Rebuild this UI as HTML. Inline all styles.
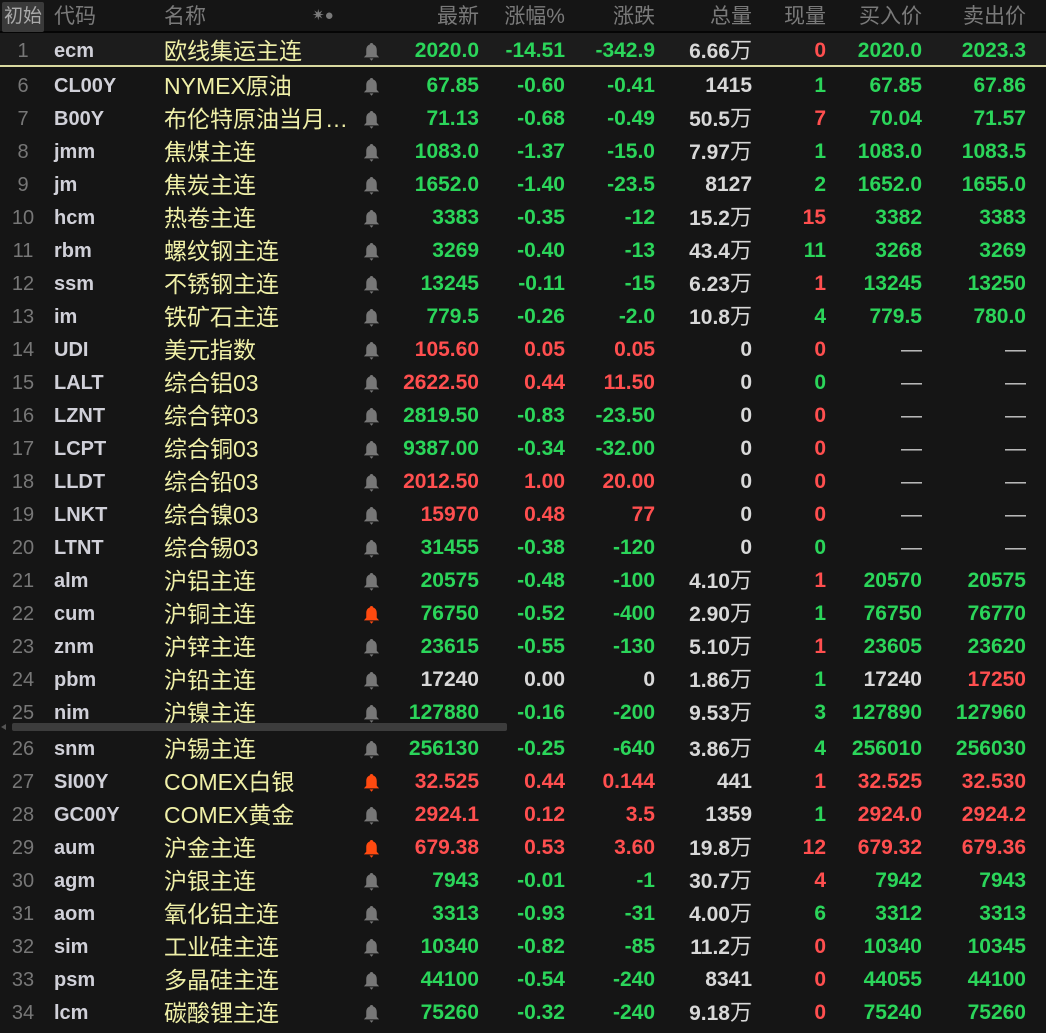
<!DOCTYPE html>
<html><head><meta charset="utf-8"><style>
body{margin:0;width:1046px;height:1033px;background:#151515;overflow:hidden;position:relative;font-family:"Liberation Sans","Noto Sans CJK SC",sans-serif}
.h{position:absolute;top:0;left:0;width:1046px;height:33px;color:#7a7a7a;font-size:21px;line-height:34px;border-bottom:2px solid #050505;box-sizing:border-box}
.h span{position:absolute}
.btn{position:absolute;left:2px;top:2px;width:42px;height:30px;background:#3a3a3a;color:#aaa;font-size:19px;line-height:30px;text-align:center;border-radius:2px}
.r{position:absolute;left:0;width:1046px;height:33px;line-height:36px;font-size:21px;font-weight:bold}
.r span{position:absolute;white-space:nowrap}
.a{left:0;width:46px;text-align:center;color:#777;font-weight:normal;font-size:20px}
.b{left:54px;color:#d0d0d8;font-size:20px}
.c{left:164px;color:#f0f0a8;font-weight:normal;font-size:23px}
.d{left:361px;top:8px;width:21px;height:21px}
.v1{right:567px}.v2{right:481px}.v3{right:391px}.v4{right:294px}.v5{right:220px}.v6{right:124px}.v7{right:20px}
.g{color:#2bd55a}.x{color:#ff4f4f}.w{color:#d8d8d8}.q{color:#ccc;font-weight:normal}
.wan{font-weight:normal;font-size:22px}
</style></head><body>
<svg width="0" height="0" style="position:absolute"><defs><symbol id="bl" viewBox="0 0 16 16"><path d="M8 1.5c.9 0 1.3.6 1.3 1.2C11.3 3.4 12 5 12 7v3.5l1.8 2H2.2L4 10.5V7c0-2 .7-3.6 2.7-4.3 0-.6.4-1.2 1.3-1.2zM6.5 13.2h3L8 15z"/></symbol></defs></svg>
<div class="h"><div class="btn">初始</div>
<span style="left:54px">代码</span><span style="left:164px">名称</span>
<span style="left:312px;font-size:15px;top:-1px">✷●</span>
<span style="right:567px">最新</span><span style="right:481px">涨幅%</span><span style="right:391px">涨跌</span><span style="right:294px">总量</span><span style="right:220px">现量</span><span style="right:124px">买入价</span><span style="right:20px">卖出价</span></div>
<div style="position:absolute;top:33px;left:0;width:1046px;height:33px;background:#1c1c1c"></div>
<div style="position:absolute;top:65px;left:0;width:1046px;height:2px;background:#d8d8a0"></div>

<div class="r" style="top:33px"><span class="a">1</span><span class="b">ecm</span><span class="c">欧线集运主连</span><svg class="d" style="fill:#777;position:absolute"><use href="#bl"/></svg><span class="v1 g">2020.0</span><span class="v2 g">-14.51</span><span class="v3 g">-342.9</span><span class="v4 w">6.66<span class="wan" style="position:static">万</span></span><span class="v5 x">0</span><span class="v6 g">2020.0</span><span class="v7 g">2023.3</span></div>
<div class="r" style="top:68px"><span class="a">6</span><span class="b">CL00Y</span><span class="c">NYMEX原油</span><svg class="d" style="fill:#777;position:absolute"><use href="#bl"/></svg><span class="v1 g">67.85</span><span class="v2 g">-0.60</span><span class="v3 g">-0.41</span><span class="v4 w">1415</span><span class="v5 g">1</span><span class="v6 g">67.85</span><span class="v7 g">67.86</span></div>
<div class="r" style="top:101px"><span class="a">7</span><span class="b">B00Y</span><span class="c">布伦特原油当月…</span><svg class="d" style="fill:#777;position:absolute"><use href="#bl"/></svg><span class="v1 g">71.13</span><span class="v2 g">-0.68</span><span class="v3 g">-0.49</span><span class="v4 w">50.5<span class="wan" style="position:static">万</span></span><span class="v5 x">7</span><span class="v6 g">70.04</span><span class="v7 g">71.57</span></div>
<div class="r" style="top:134px"><span class="a">8</span><span class="b">jmm</span><span class="c">焦煤主连</span><svg class="d" style="fill:#777;position:absolute"><use href="#bl"/></svg><span class="v1 g">1083.0</span><span class="v2 g">-1.37</span><span class="v3 g">-15.0</span><span class="v4 w">7.97<span class="wan" style="position:static">万</span></span><span class="v5 g">1</span><span class="v6 g">1083.0</span><span class="v7 g">1083.5</span></div>
<div class="r" style="top:167px"><span class="a">9</span><span class="b">jm</span><span class="c">焦炭主连</span><svg class="d" style="fill:#777;position:absolute"><use href="#bl"/></svg><span class="v1 g">1652.0</span><span class="v2 g">-1.40</span><span class="v3 g">-23.5</span><span class="v4 w">8127</span><span class="v5 g">2</span><span class="v6 g">1652.0</span><span class="v7 g">1655.0</span></div>
<div class="r" style="top:200px"><span class="a">10</span><span class="b">hcm</span><span class="c">热卷主连</span><svg class="d" style="fill:#777;position:absolute"><use href="#bl"/></svg><span class="v1 g">3383</span><span class="v2 g">-0.35</span><span class="v3 g">-12</span><span class="v4 w">15.2<span class="wan" style="position:static">万</span></span><span class="v5 x">15</span><span class="v6 g">3382</span><span class="v7 g">3383</span></div>
<div class="r" style="top:233px"><span class="a">11</span><span class="b">rbm</span><span class="c">螺纹钢主连</span><svg class="d" style="fill:#777;position:absolute"><use href="#bl"/></svg><span class="v1 g">3269</span><span class="v2 g">-0.40</span><span class="v3 g">-13</span><span class="v4 w">43.4<span class="wan" style="position:static">万</span></span><span class="v5 g">11</span><span class="v6 g">3268</span><span class="v7 g">3269</span></div>
<div class="r" style="top:266px"><span class="a">12</span><span class="b">ssm</span><span class="c">不锈钢主连</span><svg class="d" style="fill:#777;position:absolute"><use href="#bl"/></svg><span class="v1 g">13245</span><span class="v2 g">-0.11</span><span class="v3 g">-15</span><span class="v4 w">6.23<span class="wan" style="position:static">万</span></span><span class="v5 x">1</span><span class="v6 g">13245</span><span class="v7 g">13250</span></div>
<div class="r" style="top:299px"><span class="a">13</span><span class="b">im</span><span class="c">铁矿石主连</span><svg class="d" style="fill:#777;position:absolute"><use href="#bl"/></svg><span class="v1 g">779.5</span><span class="v2 g">-0.26</span><span class="v3 g">-2.0</span><span class="v4 w">10.8<span class="wan" style="position:static">万</span></span><span class="v5 g">4</span><span class="v6 g">779.5</span><span class="v7 g">780.0</span></div>
<div class="r" style="top:332px"><span class="a">14</span><span class="b">UDI</span><span class="c">美元指数</span><svg class="d" style="fill:#777;position:absolute"><use href="#bl"/></svg><span class="v1 x">105.60</span><span class="v2 x">0.05</span><span class="v3 x">0.05</span><span class="v4 w">0</span><span class="v5 x">0</span><span class="v6 q">—</span><span class="v7 q">—</span></div>
<div class="r" style="top:365px"><span class="a">15</span><span class="b">LALT</span><span class="c">综合铝03</span><svg class="d" style="fill:#777;position:absolute"><use href="#bl"/></svg><span class="v1 x">2622.50</span><span class="v2 x">0.44</span><span class="v3 x">11.50</span><span class="v4 w">0</span><span class="v5 g">0</span><span class="v6 q">—</span><span class="v7 q">—</span></div>
<div class="r" style="top:398px"><span class="a">16</span><span class="b">LZNT</span><span class="c">综合锌03</span><svg class="d" style="fill:#777;position:absolute"><use href="#bl"/></svg><span class="v1 g">2819.50</span><span class="v2 g">-0.83</span><span class="v3 g">-23.50</span><span class="v4 w">0</span><span class="v5 x">0</span><span class="v6 q">—</span><span class="v7 q">—</span></div>
<div class="r" style="top:431px"><span class="a">17</span><span class="b">LCPT</span><span class="c">综合铜03</span><svg class="d" style="fill:#777;position:absolute"><use href="#bl"/></svg><span class="v1 g">9387.00</span><span class="v2 g">-0.34</span><span class="v3 g">-32.00</span><span class="v4 w">0</span><span class="v5 x">0</span><span class="v6 q">—</span><span class="v7 q">—</span></div>
<div class="r" style="top:464px"><span class="a">18</span><span class="b">LLDT</span><span class="c">综合铅03</span><svg class="d" style="fill:#777;position:absolute"><use href="#bl"/></svg><span class="v1 x">2012.50</span><span class="v2 x">1.00</span><span class="v3 x">20.00</span><span class="v4 w">0</span><span class="v5 x">0</span><span class="v6 q">—</span><span class="v7 q">—</span></div>
<div class="r" style="top:497px"><span class="a">19</span><span class="b">LNKT</span><span class="c">综合镍03</span><svg class="d" style="fill:#777;position:absolute"><use href="#bl"/></svg><span class="v1 x">15970</span><span class="v2 x">0.48</span><span class="v3 x">77</span><span class="v4 w">0</span><span class="v5 x">0</span><span class="v6 q">—</span><span class="v7 q">—</span></div>
<div class="r" style="top:530px"><span class="a">20</span><span class="b">LTNT</span><span class="c">综合锡03</span><svg class="d" style="fill:#777;position:absolute"><use href="#bl"/></svg><span class="v1 g">31455</span><span class="v2 g">-0.38</span><span class="v3 g">-120</span><span class="v4 w">0</span><span class="v5 g">0</span><span class="v6 q">—</span><span class="v7 q">—</span></div>
<div class="r" style="top:563px"><span class="a">21</span><span class="b">alm</span><span class="c">沪铝主连</span><svg class="d" style="fill:#777;position:absolute"><use href="#bl"/></svg><span class="v1 g">20575</span><span class="v2 g">-0.48</span><span class="v3 g">-100</span><span class="v4 w">4.10<span class="wan" style="position:static">万</span></span><span class="v5 x">1</span><span class="v6 g">20570</span><span class="v7 g">20575</span></div>
<div class="r" style="top:596px"><span class="a">22</span><span class="b">cum</span><span class="c">沪铜主连</span><svg class="d" style="fill:#ff4a10;position:absolute"><use href="#bl"/></svg><span class="v1 g">76750</span><span class="v2 g">-0.52</span><span class="v3 g">-400</span><span class="v4 w">2.90<span class="wan" style="position:static">万</span></span><span class="v5 g">1</span><span class="v6 g">76750</span><span class="v7 g">76770</span></div>
<div class="r" style="top:629px"><span class="a">23</span><span class="b">znm</span><span class="c">沪锌主连</span><svg class="d" style="fill:#777;position:absolute"><use href="#bl"/></svg><span class="v1 g">23615</span><span class="v2 g">-0.55</span><span class="v3 g">-130</span><span class="v4 w">5.10<span class="wan" style="position:static">万</span></span><span class="v5 x">1</span><span class="v6 g">23605</span><span class="v7 g">23620</span></div>
<div class="r" style="top:662px"><span class="a">24</span><span class="b">pbm</span><span class="c">沪铅主连</span><svg class="d" style="fill:#777;position:absolute"><use href="#bl"/></svg><span class="v1 w">17240</span><span class="v2 w">0.00</span><span class="v3 w">0</span><span class="v4 w">1.86<span class="wan" style="position:static">万</span></span><span class="v5 g">1</span><span class="v6 w">17240</span><span class="v7 x">17250</span></div>
<div class="r" style="top:695px"><span class="a">25</span><span class="b">nim</span><span class="c">沪镍主连</span><svg class="d" style="fill:#777;position:absolute"><use href="#bl"/></svg><span class="v1 g">127880</span><span class="v2 g">-0.16</span><span class="v3 g">-200</span><span class="v4 w">9.53<span class="wan" style="position:static">万</span></span><span class="v5 g">3</span><span class="v6 g">127890</span><span class="v7 g">127960</span></div>
<div style="position:absolute;top:723px;left:0;width:1046px;height:8px;background:#151515"></div>
<div style="position:absolute;top:723px;left:12px;width:495px;height:8px;background:#3c3c3c;border-radius:2px"></div>
<div style="position:absolute;top:724px;left:1px;width:0;height:0;border-top:3px solid transparent;border-bottom:3px solid transparent;border-right:5px solid #555"></div>

<div class="r" style="top:731px"><span class="a">26</span><span class="b">snm</span><span class="c">沪锡主连</span><svg class="d" style="fill:#777;position:absolute"><use href="#bl"/></svg><span class="v1 g">256130</span><span class="v2 g">-0.25</span><span class="v3 g">-640</span><span class="v4 w">3.86<span class="wan" style="position:static">万</span></span><span class="v5 g">4</span><span class="v6 g">256010</span><span class="v7 g">256030</span></div>
<div class="r" style="top:764px"><span class="a">27</span><span class="b">SI00Y</span><span class="c">COMEX白银</span><svg class="d" style="fill:#ff4a10;position:absolute"><use href="#bl"/></svg><span class="v1 x">32.525</span><span class="v2 x">0.44</span><span class="v3 x">0.144</span><span class="v4 w">441</span><span class="v5 x">1</span><span class="v6 x">32.525</span><span class="v7 x">32.530</span></div>
<div class="r" style="top:797px"><span class="a">28</span><span class="b">GC00Y</span><span class="c">COMEX黄金</span><svg class="d" style="fill:#777;position:absolute"><use href="#bl"/></svg><span class="v1 x">2924.1</span><span class="v2 x">0.12</span><span class="v3 x">3.5</span><span class="v4 w">1359</span><span class="v5 g">1</span><span class="v6 x">2924.0</span><span class="v7 x">2924.2</span></div>
<div class="r" style="top:830px"><span class="a">29</span><span class="b">aum</span><span class="c">沪金主连</span><svg class="d" style="fill:#ff4a10;position:absolute"><use href="#bl"/></svg><span class="v1 x">679.38</span><span class="v2 x">0.53</span><span class="v3 x">3.60</span><span class="v4 w">19.8<span class="wan" style="position:static">万</span></span><span class="v5 x">12</span><span class="v6 x">679.32</span><span class="v7 x">679.36</span></div>
<div class="r" style="top:863px"><span class="a">30</span><span class="b">agm</span><span class="c">沪银主连</span><svg class="d" style="fill:#777;position:absolute"><use href="#bl"/></svg><span class="v1 g">7943</span><span class="v2 g">-0.01</span><span class="v3 g">-1</span><span class="v4 w">30.7<span class="wan" style="position:static">万</span></span><span class="v5 x">4</span><span class="v6 g">7942</span><span class="v7 g">7943</span></div>
<div class="r" style="top:896px"><span class="a">31</span><span class="b">aom</span><span class="c">氧化铝主连</span><svg class="d" style="fill:#777;position:absolute"><use href="#bl"/></svg><span class="v1 g">3313</span><span class="v2 g">-0.93</span><span class="v3 g">-31</span><span class="v4 w">4.00<span class="wan" style="position:static">万</span></span><span class="v5 g">6</span><span class="v6 g">3312</span><span class="v7 g">3313</span></div>
<div class="r" style="top:929px"><span class="a">32</span><span class="b">sim</span><span class="c">工业硅主连</span><svg class="d" style="fill:#777;position:absolute"><use href="#bl"/></svg><span class="v1 g">10340</span><span class="v2 g">-0.82</span><span class="v3 g">-85</span><span class="v4 w">11.2<span class="wan" style="position:static">万</span></span><span class="v5 x">0</span><span class="v6 g">10340</span><span class="v7 g">10345</span></div>
<div class="r" style="top:962px"><span class="a">33</span><span class="b">psm</span><span class="c">多晶硅主连</span><svg class="d" style="fill:#777;position:absolute"><use href="#bl"/></svg><span class="v1 g">44100</span><span class="v2 g">-0.54</span><span class="v3 g">-240</span><span class="v4 w">8341</span><span class="v5 x">0</span><span class="v6 g">44055</span><span class="v7 g">44100</span></div>
<div class="r" style="top:995px"><span class="a">34</span><span class="b">lcm</span><span class="c">碳酸锂主连</span><svg class="d" style="fill:#777;position:absolute"><use href="#bl"/></svg><span class="v1 g">75260</span><span class="v2 g">-0.32</span><span class="v3 g">-240</span><span class="v4 w">9.18<span class="wan" style="position:static">万</span></span><span class="v5 x">0</span><span class="v6 g">75240</span><span class="v7 g">75260</span></div>
</body></html>
